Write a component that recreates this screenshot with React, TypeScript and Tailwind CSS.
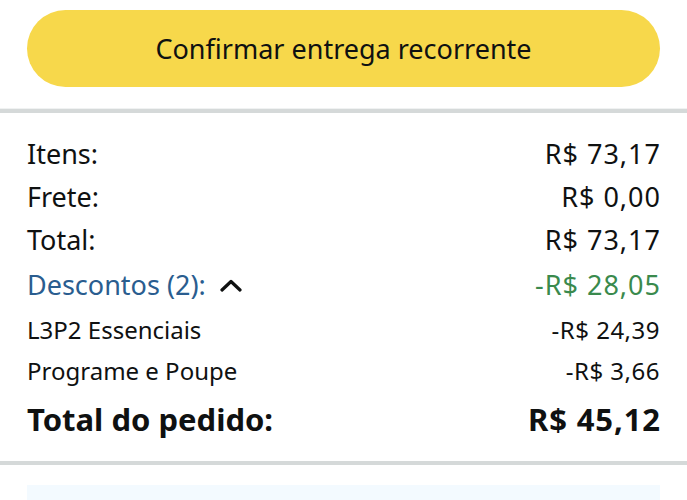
export default function App() {
  const font = { fontFamily: '"Noto Sans", "Open Sans", sans-serif' };
  return (
    <div className="w-[687px] h-[500px] bg-white overflow-hidden text-[#0f1111]" style={font}>
      <div className="pt-[10px] pb-[21px] px-[27px] border-b border-[#f0f2f2]">
        <button className="w-full h-[77px] rounded-full bg-[#f7d84b] flex items-center justify-center text-[27px] text-[#0f1111] pt-[2px]">
          Confirmar entrega recorrente
        </button>
      </div>
      <div className="h-[4px] bg-[#d5d9d9]" />
      <div className="px-[27px] pt-[20px] pb-[14px]">
        <div className="h-[43px] flex items-center justify-between text-[27px]">
          <span>Itens:</span>
          <span className="tracking-[1px] mr-[-1px]">R$ 73,17</span>
        </div>
        <div className="h-[43px] flex items-center justify-between text-[27px]">
          <span>Frete:</span>
          <span className="tracking-[1px] mr-[-1px]">R$ 0,00</span>
        </div>
        <div className="h-[43px] flex items-center justify-between text-[27px]">
          <span>Total:</span>
          <span className="tracking-[1px] mr-[-1px]">R$ 73,17</span>
        </div>
        <div className="h-[47px] flex items-center justify-between text-[27px]">
          <span className="flex items-center gap-[14px] text-[#2a5d8f]">
            Descontos (2):
            <svg width="22" height="13" viewBox="0 0 22 13" fill="none">
              <path d="M2 11 L11 2.5 L20 11" stroke="#0f1111" strokeWidth="3.2" strokeLinecap="round" strokeLinejoin="round" />
            </svg>
          </span>
          <span className="text-[#3a8a4d] tracking-[1px] mr-[-1px]">-R$ 28,05</span>
        </div>
        <div className="h-[41px] flex items-center justify-between text-[24px]">
          <span>L3P2 Essenciais</span>
          <span className="tracking-[0.5px]">-R$ 24,39</span>
        </div>
        <div className="h-[41px] flex items-center justify-between text-[24px]">
          <span>Programe e Poupe</span>
          <span className="tracking-[0.5px]">-R$ 3,66</span>
        </div>
        <div className="h-[56px] flex items-center justify-between text-[31px] font-bold">
          <span>Total do pedido:</span>
          <span className="tracking-[0.9px] mr-[-1px]">R$ 45,12</span>
        </div>
      </div>
      <div className="h-[4px] bg-[#d5d9d9]" />
      <div className="px-[27px] pt-[20px]">
        <div className="h-[60px] bg-[#f3faff]" />
      </div>
    </div>
  );
}
